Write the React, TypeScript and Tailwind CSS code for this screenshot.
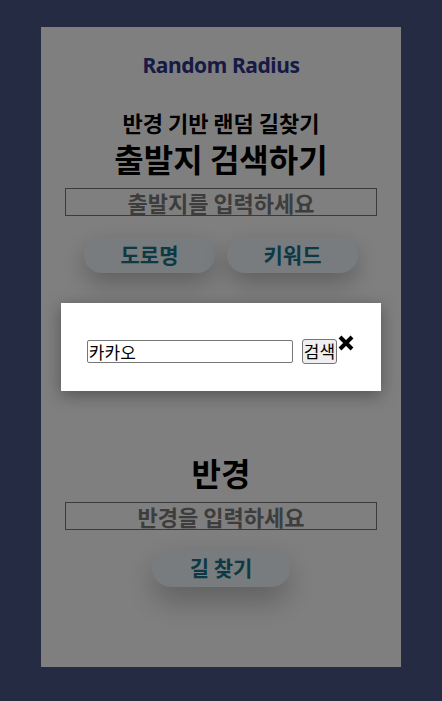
import React from "react";

const kr = { fontFamily: '"Noto Sans CJK KR", "Noto Sans", sans-serif' };

const App = () => {
  return (
    <div className="min-h-screen bg-[#252b42] flex justify-center pt-[27px]" style={kr}>
      <div className="relative w-[360px] h-[640px] bg-white flex flex-col items-center">
        <h1
          className="mt-[23px] text-[21px] leading-[30px] font-bold tracking-[-0.4px] text-[#2c348a]"
          style={{ fontFamily: '"Noto Sans", sans-serif' }}
        >
          Random Radius
        </h1>
        <h3 className="mt-[28px] text-[22px] leading-[28px] font-bold text-black">
          반경 기반 랜덤 길찾기
        </h3>
        <h2 className="mt-[2px] text-[32px] leading-[40px] font-bold text-black">
          출발지 검색하기
        </h2>
        <input
          className="mt-[10px] w-[312px] h-[28px] border border-[#767676] text-center text-[22px] font-bold placeholder:text-[#7a7a7a] outline-none"
          placeholder="출발지를 입력하세요"
        />
        <div className="mt-[21px] flex gap-[12px]">
          <button className="w-[131px] h-[36px] rounded-[18px] bg-[#f2f8fc] text-[#1a7389] text-[21px] font-bold shadow-[0_10px_24px_rgba(0,0,0,0.25)]">
            도로명
          </button>
          <button className="w-[131px] h-[36px] rounded-[18px] bg-[#f2f8fc] text-[#1a7389] text-[21px] font-bold shadow-[0_10px_24px_rgba(0,0,0,0.25)]">
            키워드
          </button>
        </div>
        <h2 className="mt-[179px] text-[32px] leading-[40px] font-bold text-black">반경</h2>
        <input
          className="mt-[10px] w-[312px] h-[28px] border border-[#767676] text-center text-[22px] font-bold placeholder:text-[#7a7a7a] outline-none"
          placeholder="반경을 입력하세요"
        />
        <button className="mt-[19px] w-[138px] h-[38px] rounded-[19px] bg-[#f2f8fc] text-[#1a7389] text-[21px] font-bold shadow-[0_14px_30px_rgba(0,0,0,0.25)]">
          길 찾기
        </button>

        {/* modal */}
        <div className="absolute inset-0 bg-black/50 flex items-center justify-center">
          <div className="w-[320px] h-[88px] bg-white shadow-[0_4px_16px_rgba(0,0,0,0.35)] flex items-center justify-center pt-[8px]">
            <input
              className="w-[206px] h-[23px] border border-[#767676] rounded-[2px] px-[1px] text-[17px] leading-[20px] text-black outline-none"
              defaultValue="카카오"
            />
            <button className="ml-[9px] h-[25px] px-[1px] border border-[#767676] rounded-[3px] bg-[#efefef] text-[17px] leading-[20px] text-black">
              검색
            </button>
            <svg className="mb-[16px]" width="18" height="18" viewBox="0 0 18 18">
              <path d="M3 3 L15 15 M15 3 L3 15" stroke="black" strokeWidth="4" strokeLinecap="butt" />
            </svg>
          </div>
        </div>
      </div>
    </div>
  );
};

export default App;
